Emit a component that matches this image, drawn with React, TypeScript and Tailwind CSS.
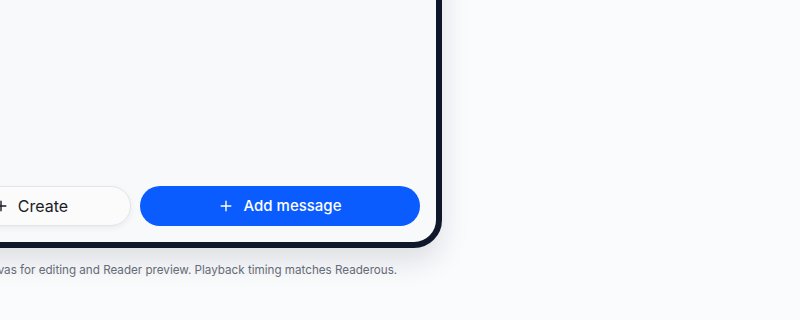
import React from "react";

function PlusIcon({ className }: { className?: string }) {
    return (
        <svg viewBox="0 0 16 16" className={className} fill="none" stroke="currentColor" strokeWidth={1.6} strokeLinecap="round">
            <path d="M8 2.5v11M2.5 8h11" />
        </svg>
    );
}

export default function App() {
    return (
        <div className="h-[320px] w-[800px] overflow-hidden bg-[#fafbfd] font-['Inter',sans-serif]">
            <div className="-ml-[87px] -mt-[200px] flex w-[529px] flex-col">
                {/* Device frame */}
                <div className="flex h-[448px] flex-col rounded-[28px] border-[6px] border-[#0f172a] bg-[#f8f9fb] shadow-[0_14px_28px_rgba(15,23,42,0.12)]">
                    <div className="flex-1" />
                    <div className="flex gap-[9px] px-4 pb-4">
                        <button className="flex h-10 w-[196px] items-center justify-center gap-[10px] rounded-full border border-[#e2e5ea] bg-[#fbfbfc] pr-1 text-base text-[#1a1d24] shadow-[0_2px_6px_rgba(15,23,42,0.06)]">
                            <PlusIcon className="h-3.5 w-3.5" />
                            Create
                        </button>
                        <button className="flex h-10 flex-1 items-center justify-center gap-[11px] rounded-full bg-[#0a5cff] text-[15px] font-medium text-white">
                            <PlusIcon className="h-3.5 w-3.5" />
                            Add message
                        </button>
                    </div>
                </div>
                <p className="mt-[14px] pl-[19px] text-[11.65px] text-[#656b76]">
                    Use the canvas for editing and Reader preview. Playback timing matches Readerous.
                </p>
            </div>
        </div>
    );
}
